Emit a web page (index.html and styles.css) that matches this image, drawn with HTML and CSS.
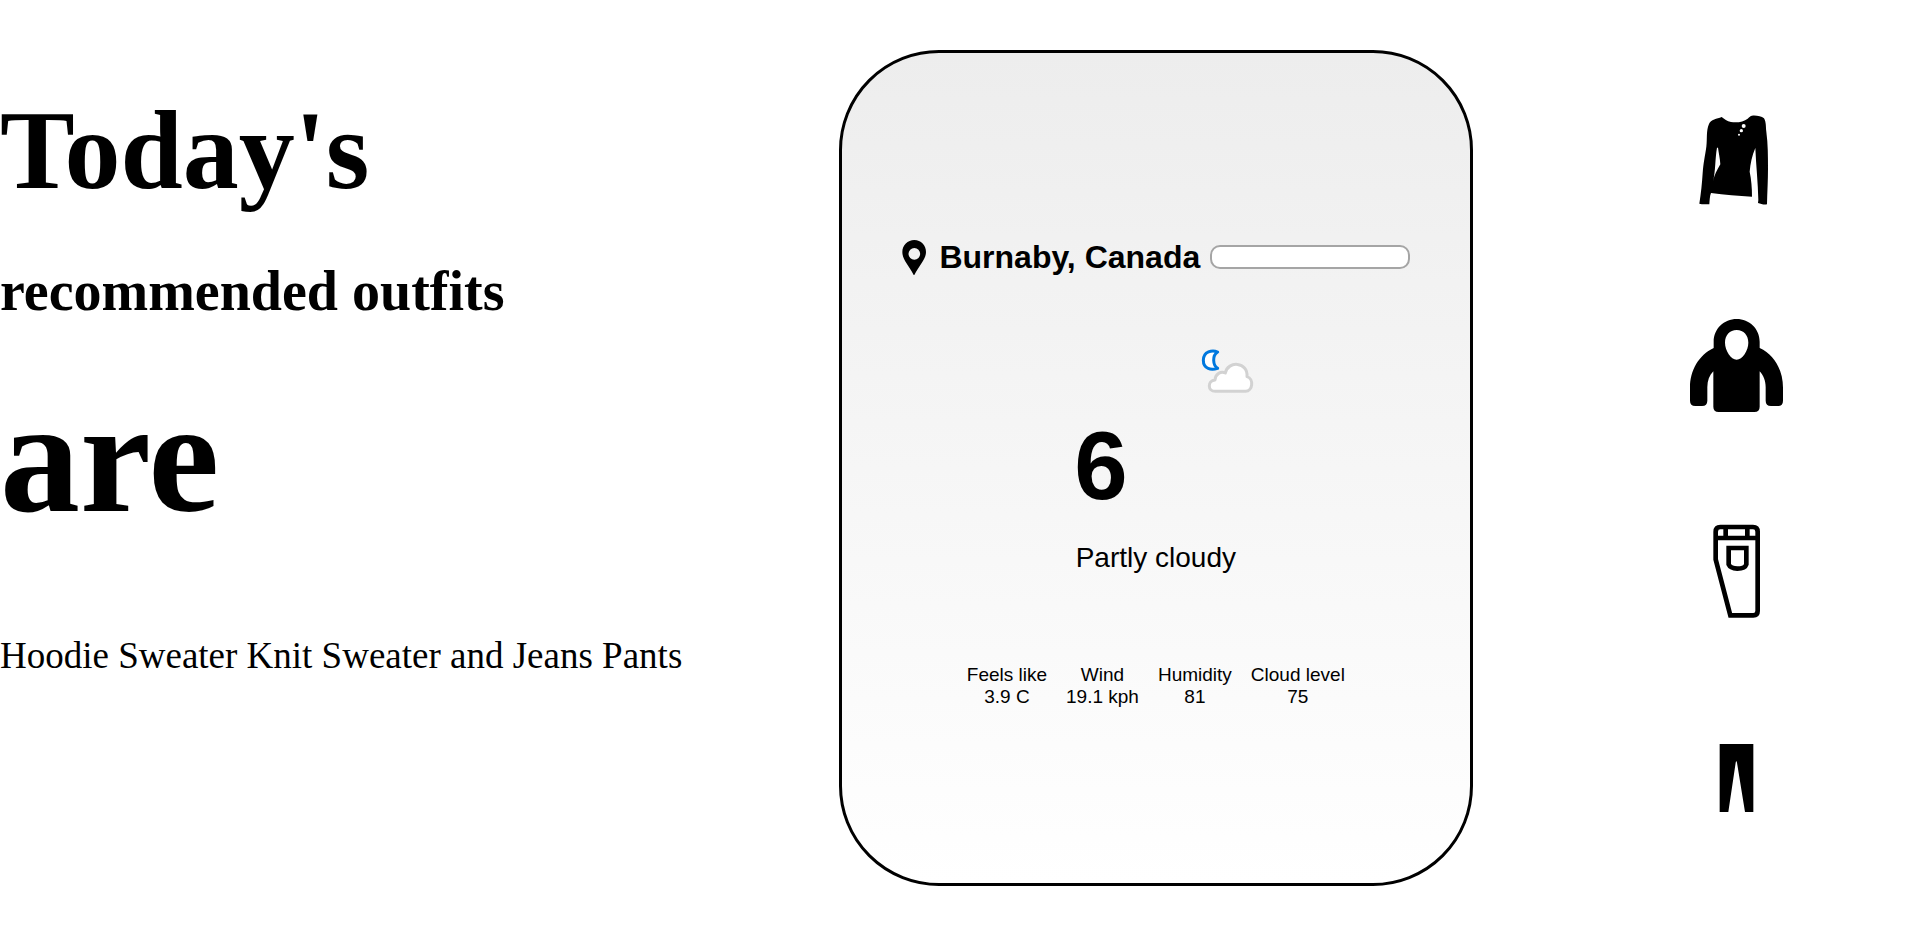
FILE: index.html
```html
<!DOCTYPE html>
<html lang="en">
<head>
<meta charset="utf-8">
<title>Today's outfits</title>
<link rel="stylesheet" href="styles.css">
</head>
<body>
<main class="page">
  <section class="intro">
    <h1 class="intro-day">Today's</h1>
    <h2 class="intro-topic">recommended outfits</h2>
    <h1 class="intro-are">are</h1>
    <p class="intro-outfit">Hoodie Sweater Knit Sweater and Jeans Pants</p>
  </section>

  <section class="weather">
    <div class="location">
      <svg class="pin" viewBox="36 54 84 108" aria-hidden="true">
        <path fill-rule="evenodd" d="M76 57C56 57 40 73 40 93c0 13 6 23 12 33 8 13 17 25 23 38 6-13 15-25 23-38 6-10 13-20 13-33 0-20-15-36-35-36zm0 24a17 17 0 1 1 0 35 17 17 0 0 1 0-35z"/>
      </svg>
      <label class="city" for="city">Burnaby, Canada</label>
      <input class="city-input" id="city" type="text">
    </div>
    <svg class="sky" viewBox="438 0 192 192" role="img" aria-label="Partly cloudy night">
      <path class="moon" d="M503 36C487 29 460 34 460 61s24 30 43 24C488 76 486 46 503 36z"/>
      <path class="cloud" d="M496 154c-24 0-24-32-1-34 1-19 18-27 31-21 7-38 69-34 65 11 21 6 18 44-5 44z"/>
    </svg>
    <p class="temperature">6</p>
    <p class="condition">Partly cloudy</p>
    <dl class="stats">
      <div><dt>Feels like</dt><dd>3.9 C</dd></div>
      <div><dt>Wind</dt><dd>19.1 kph</dd></div>
      <div><dt>Humidity</dt><dd>81</dd></div>
      <div><dt>Cloud level</dt><dd>75</dd></div>
    </dl>
  </section>

  <section class="closet">
    <svg class="garment" viewBox="27 36 282 282" role="img" aria-label="Knit sweater">
      <path d="M84 72C89 58 108 57 122 51c8 6 16 13 28 15 20 3 38-1 50-10 6-5 8-9 13-9 13-1 28 1 36 8 7 12 5 25 7 40 5 36 5 75 5 110 0 36-2 71-3 108-9 2-18-1-27-4l1-9c-1-51-7-104-9-156-10 23-15 47-17 71 5 25 7 47 7 75-41-2-82-6-123-11-4 10-4 22-5 34-10 0-20 0-30-2 5-30 8-61 10-92 2-30 7-51 11-79 3-25-1-48 8-68z"/>
      <path class="cutout" d="M108 143c-6 32-4 72-12 101 4-19 12-34 22-51-1-18-5-34-7-50z"/>
      <circle class="cutout" cx="188" cy="78" r="6"/>
      <circle class="cutout" cx="181" cy="92" r="5"/>
      <circle class="cutout" cx="174" cy="104" r="3"/>
    </svg>
    <svg class="garment" viewBox="27 24 282 282" role="img" aria-label="Hoodie sweater">
      <path fill-rule="evenodd" d="M98 114V95c0-39 31-68 69-68s69 29 69 68v19c45 21 70 68 70 119v39q0 16-16 16h-20q-16 0-16-16v-40c0-20-7-36-18-48v106q0 16-16 16H113q-16 0-16-16V184c-12 12-18 28-18 48v40q0 16-16 16H43q-16 0-16-16v-39c0-51 26-98 71-119zm69-54c-21 0-35 16-35 38 0 23 18 51 35 51s35-28 35-51c0-22-14-38-35-38z"/>
    </svg>
    <svg class="garment" viewBox="27 27 282 282" role="img" aria-label="Jeans">
      <g class="denim">
        <path d="M104 50q0-14 14-14h98q14 0 14 14v238q0 13-13 13h-69L104 133zM104 69h126"/>
        <path d="M134 36v33M199 36v33"/>
        <path d="M143 99h53v49q-4 13-27 13-21-1-26-13z"/>
      </g>
    </svg>
    <svg class="garment" viewBox="27 15 282 282" role="img" aria-label="Pants">
      <path d="M116 57h101v204h-25L168 113q-2-8-4 0L142 261h-26z"/>
    </svg>
  </section>
</main>
</body>
</html>
```
FILE: styles.css
```css
* {
  box-sizing: border-box;
}

body {
  margin: 0;
  background: #fff;
  color: #000;
  font-family: "Liberation Serif", "Times New Roman", serif;
}

h1, h2, p, dl, dd {
  margin: 0;
}

.page {
  display: grid;
  grid-template-columns: 43.7% 33% 1fr;
  min-height: 100vh;
}

/* Headline */
.intro {
  padding-top: 85px;
}

.intro-day {
  margin-bottom: 44px;
  font-size: 112px;
  line-height: 130px;
}

.intro-topic {
  margin-bottom: 42px;
  font-size: 56px;
  line-height: 64px;
}

.intro-are {
  margin-bottom: 86px;
  font-size: 160px;
  line-height: 184px;
}

.intro-outfit {
  font-size: 37px;
  line-height: 42px;
}

/* Weather card */
.weather {
  display: flex;
  flex-direction: column;
  align-items: center;
  margin: 50px 0;
  padding: 186px 24px 24px;
  border: 3px solid #000;
  border-radius: 100px;
  background: linear-gradient(#ededed, #fff);
  font-family: "Liberation Sans", Arial, sans-serif;
}

.location {
  display: flex;
  align-items: center;
  gap: 10px;
  margin-bottom: 65px;
}

.pin {
  width: 28px;
  height: 36px;
}

.city {
  font-size: 32px;
  font-weight: bold;
  line-height: 36px;
}

.city-input {
  width: 200px;
  height: 24px;
  padding: 0 8px;
  border: 2px solid #a5a5a5;
  border-radius: 10px;
  background: #fff;
}

.sky {
  width: 64px;
  height: 64px;
  margin-left: 144px;
}

.moon,
.cloud {
  fill: #fff;
  stroke-width: 9px;
  stroke-linejoin: round;
}

.moon {
  stroke: #0078de;
}

.cloud {
  stroke: #d2d2d2;
}

.temperature {
  margin: 8px 110px 22px 0;
  font-size: 96px;
  font-weight: bold;
  line-height: 108px;
}

.condition {
  margin-bottom: 90px;
  font-size: 28px;
  line-height: 32px;
}

.stats {
  display: flex;
  gap: 19px;
  font-size: 19px;
  line-height: 22px;
  text-align: center;
}

/* Garment icons */
.closet {
  display: flex;
  flex-direction: column;
  align-items: center;
  justify-content: space-evenly;
  padding-left: 18%;
}

.garment {
  width: 94px;
  height: 94px;
}

.cutout {
  fill: #fff;
}

.denim {
  fill: none;
  stroke: #000;
  stroke-width: 14px;
}
```
